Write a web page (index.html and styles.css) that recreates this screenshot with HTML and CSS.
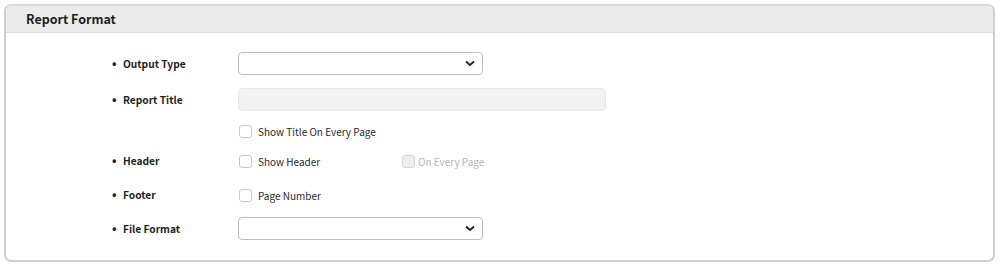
FILE: index.html
```html
<!DOCTYPE html>
<html lang="en">
<head>
    <meta charset="UTF-8">
    <meta name="viewport" content="width=device-width, initial-scale=1.0">
    <title>Report Format</title>
    <link rel="stylesheet" href="styles.css">
</head>
<body>
    <div class="panel">
        <div class="panel-header">Report Format</div>
        <div class="panel-body">
            <div class="row row-output">
                <div class="field-label">Output Type</div>
                <div class="select">
                    <svg class="chevron" width="10" height="7" viewBox="0 0 10 7"><polyline points="1,1.5 5,5 9,1.5" fill="none" stroke="#222" stroke-width="1.8"/></svg>
                </div>
            </div>
            <div class="row row-title">
                <div class="field-label">Report Title</div>
                <div class="text-input"></div>
            </div>
            <div class="row row-check row-every">
                <div class="field-label empty"></div>
                <label class="check"><span class="box"></span>Show Title On Every Page</label>
            </div>
            <div class="row row-check row-header">
                <div class="field-label">Header</div>
                <label class="check check-wide"><span class="box"></span>Show Header</label>
                <label class="check disabled"><span class="box"></span>On Every Page</label>
            </div>
            <div class="row row-check row-footer">
                <div class="field-label">Footer</div>
                <label class="check"><span class="box"></span>Page Number</label>
            </div>
            <div class="row row-format">
                <div class="field-label">File Format</div>
                <div class="select">
                    <svg class="chevron" width="10" height="7" viewBox="0 0 10 7"><polyline points="1,1.5 5,5 9,1.5" fill="none" stroke="#222" stroke-width="1.8"/></svg>
                </div>
            </div>
        </div>
    </div>
</body>
</html>
```

FILE: styles.css
```css
body {
    margin: 0;
    background-color: #ffffff;
    font-family: "Noto Sans CJK KR", "Noto Sans", sans-serif;
    color: #222222;
}
.panel {
    margin: 4px 5px 0 4px;
    height: 258px;
    border: 2px solid #cfcfcf;
    border-top-color: #dadada;
    border-radius: 7px;
    overflow: hidden;
    box-sizing: border-box;
}
.panel-header {
    height: 26px;
    line-height: 26px;
    background-color: #ececec;
    border-bottom: 1px solid #dddddd;
    padding-left: 20px;
    font-size: 12.5px;
    font-weight: bold;
    color: #1e1e1e;
}
.panel-body {
    padding: 19px 0 0 104px;
}
.row {
    display: flex;
    align-items: center;
    height: 23px;
}
.row-title { margin-top: 13px; }
.row-every { margin-top: 8px; }
.row-header { margin-top: 7px; }
.row-footer { margin-top: 11px; }
.row-format { margin-top: 11px; }
.field-label {
    width: 128px;
    font-size: 10.2px;
    font-weight: bold;
    color: #1e1e1e;
}
.field-label::before {
    content: "\2022";
    display: inline-block;
    width: 11px;
    padding-left: 2px;
    font-size: 12px;
    line-height: 10px;
}
.field-label.empty::before {
    content: "";
}
.select {
    width: 245px;
    height: 23px;
    box-sizing: border-box;
    border: 1px solid #bdbdbd;
    border-radius: 4px;
    display: flex;
    align-items: center;
    justify-content: flex-end;
    padding-right: 7px;
}
.text-input {
    width: 368px;
    height: 23px;
    box-sizing: border-box;
    background-color: #f2f2f2;
    border: 1px solid #e8e8e8;
    border-radius: 4px;
}
.check {
    display: flex;
    align-items: center;
    font-size: 10px;
    color: #2a2a2a;
    padding-top: 1px;
}
.check-wide {
    width: 163px;
}
.box {
    width: 13px;
    height: 13px;
    box-sizing: border-box;
    border: 1px solid #c8c8c8;
    border-radius: 3px;
    margin: 0 6px 0 1px;
    background-color: #ffffff;
}
.check.disabled {
    color: #b5b5b5;
}
.check.disabled .box {
    background-color: #eeeeee;
    border-color: #d6d6d6;
    margin-right: 3px;
}
```
